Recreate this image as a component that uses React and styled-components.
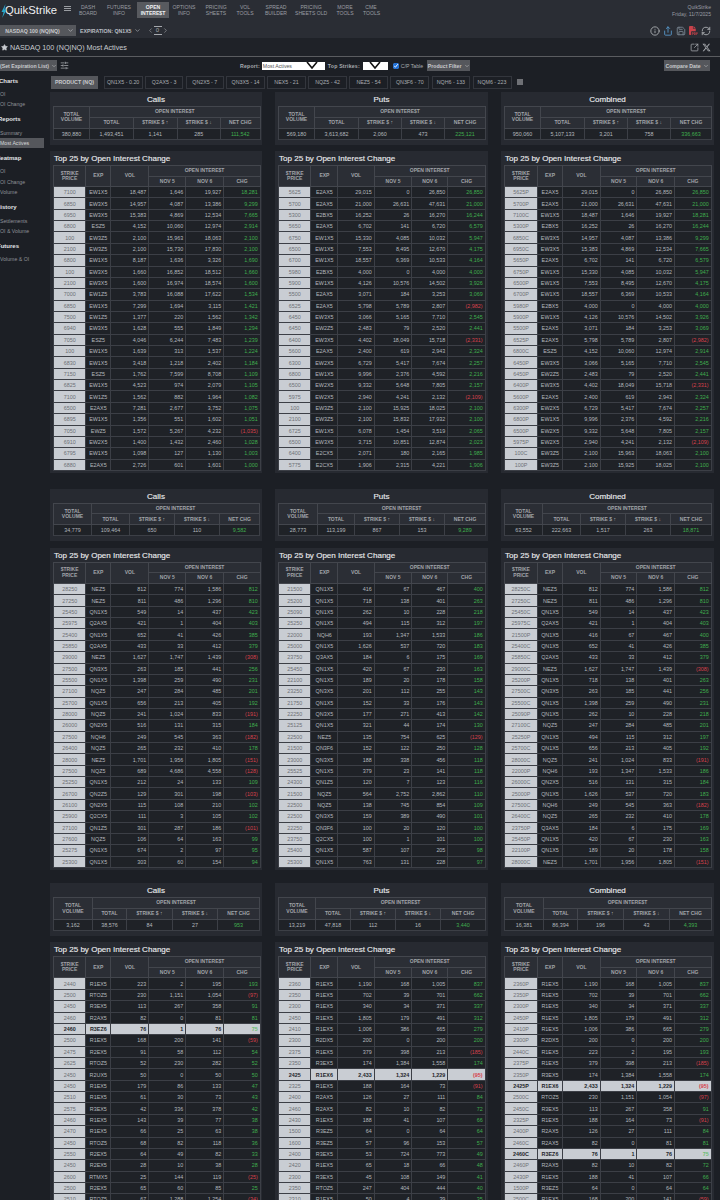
import React from "react";
import styled, { createGlobalStyle } from "styled-components";
import { ChevronDown, ChevronLeft, ChevronRight, Info, RefreshCw, Save, Share, SlidersHorizontal, SquareArrowOutUpRight, Star } from "lucide-react";
import { FaFilePdf, FaXTwitter } from "react-icons/fa6";

const GlobalStyle = createGlobalStyle`
  html, body {
    margin: 0;
    padding: 0;
    background: #1c1f25;
    overflow: hidden;
  }
  * { box-sizing: border-box; }
`;

const Page = styled.div`
  width: 720px;
  height: 1200px;
  overflow: hidden;
  background: #1c1f25;
  font-family: "Liberation Sans", Arial, sans-serif;
  color: #b9bdc3;
`;

const Header = styled.header`
  height: 38px;
  background: #2a2d34;
  display: flex;
  flex-direction: column;
`;

const TopRow = styled.div`
  height: 23px;
  display: flex;
  align-items: flex-start;
`;

const Logo = styled.div`
  width: 64px;
  padding: 4px 0 0 5px;
  font-size: 11.3px;
  line-height: 13px;
  color: #eef0f2;
  display: flex;
  position: relative;
`;

const Bolt = styled.svg`
  position: absolute;
  left: 1px;
  top: 4px;
`;

const Burger = styled.div`
  width: 7px;
  margin-top: 6px;
  border-top: 1px solid #9a9da2;
  border-bottom: 1px solid #9a9da2;
  height: 5px;
  &::after {
    content: "";
    display: block;
    height: 1px;
    margin-top: 1px;
    background: #9a9da2;
  }
`;

const Nav = styled.nav`
  display: flex;
  margin-left: 2px;
  padding-top: 2px;
`;

const NavItem = styled.div`
  width: ${(p) => p.$w}px;
  height: 16px;
  margin-left: ${(p) => p.$ml || 0}px;
  padding-top: 2px;
  text-align: center;
  font-size: 5.1px;
  line-height: 6px;
  white-space: nowrap;
  color: ${(p) => (p.$active ? "#f0f1f3" : "#9a9da3")};
  font-weight: ${(p) => (p.$active ? 700 : 400)};
  background: ${(p) => (p.$active ? "#585a5f" : "transparent")};
`;

const UserBlock = styled.div`
  margin-left: auto;
  padding: 4px 9px 0 0;
  text-align: right;
  font-size: 5.1px;
  line-height: 6.5px;
  color: #9a9da3;
`;

const SubRow = styled.div`
  height: 15px;
  display: flex;
  align-items: center;
`;

const GrayButton = styled.div`
  height: ${(p) => p.$h || 11}px;
  width: ${(p) => p.$w}px;
  margin-left: ${(p) => p.$ml || 0};
  background: #55575c;
  color: #c8cacd;
  font-size: 5.2px;
  font-weight: 700;
  display: flex;
  align-items: center;
  justify-content: center;
  gap: 2px;
  white-space: nowrap;
`;

const ExpirationLabel = styled.div`
  margin-left: 4px;
  font-size: 5.2px;
  font-weight: 700;
  color: #b9bdc3;
  display: flex;
  align-items: center;
  gap: 2px;
`;

const Stepper = styled.div`
  margin-left: 6px;
  display: flex;
  align-items: center;
  color: #a5a8ad;
`;

const CalendarMark = styled.div`
  width: 8px;
  height: 9px;
  border-top: 1px solid #a5a8ad;
  border-bottom: 1px solid #a5a8ad;
  font-size: 6px;
  line-height: 7px;
  text-align: center;
  color: #a5a8ad;
`;

const HeaderIcons = styled.div`
  margin-left: auto;
  padding-right: 9px;
  display: flex;
  align-items: center;
  gap: 3px;
`;

const TitleBar = styled.div`
  height: 19px;
  background: #1f2228;
  border-bottom: 1px solid #5a5c60;
  display: flex;
  align-items: center;
  padding: 0 9px 0 1px;
  font-size: 7.2px;
  color: #c9ccd0;
  gap: 2px;
`;

const TitleActions = styled.div`
  margin-left: auto;
  display: flex;
  align-items: center;
  gap: 3px;
  color: #a9acb1;
`;

const FilterRow = styled.div`
  height: 17px;
  display: flex;
  align-items: center;
  padding-right: 10px;
  font-size: 5.2px;
  color: #a8abb0;
`;

const SlidersIcon = styled(SlidersHorizontal)`
  margin-left: 3px;
`;

const FilterLabel = styled.div`
  margin-left: ${(p) => p.$ml}px;
  font-weight: 700;
  letter-spacing: 0.2px;
  white-space: nowrap;
`;

const WhiteSelect = styled.div`
  width: ${(p) => p.$w}px;
  height: 8px;
  margin-left: ${(p) => p.$ml}px;
  background: #fff;
  color: #555;
  font-size: 5.2px;
  line-height: 8px;
  padding-left: 1px;
  position: relative;
  overflow: hidden;
`;

const SelectArrow = styled.svg`
  position: absolute;
  right: ${(p) => p.$r}px;
  top: 0;
`;

const CheckBox = styled.input`
  width: 6px;
  height: 6px;
  margin: 0 2px 0 5px;
  accent-color: #1f6fd6;
`;

const Body = styled.div`
  display: flex;
  align-items: flex-start;
`;

const Sidebar = styled.aside`
  width: 44px;
  flex: none;
  overflow: hidden;
  padding-top: 1.5px;
`;

const SideHeading = styled.div`
  height: 11px;
  line-height: 11px;
  margin: ${(p) => (p.$first ? 0 : 4.8)}px 0 2.4px ${(p) => p.$offset}px;
  font-size: 6px;
  font-weight: 700;
  color: #e1e3e6;
  white-space: nowrap;
`;

const SideItem = styled.div`
  height: 10.3px;
  line-height: 10.3px;
  font-size: 5.2px;
  white-space: nowrap;
  color: ${(p) => (p.$active ? "#d6d8da" : "#8f9298")};
  background: ${(p) => (p.$active ? "#55575c" : "transparent")};
`;

const Content = styled.main`
  margin-left: 6px;
  width: 664px;
  flex: none;
`;

const Tabs = styled.div`
  height: 18px;
  padding: 1.5px 0 0 1px;
  display: flex;
  align-items: flex-start;
  gap: 2.6px;
`;

const Tab = styled.div`
  width: ${(p) => p.$w}px;
  height: 13px;
  margin-right: ${(p) => p.$mr || 0}px;
  border: 1px solid ${(p) => (p.$active ? "#55575c" : "#33363d")};
  background: ${(p) => (p.$active ? "#55575c" : "transparent")};
  color: ${(p) => (p.$active ? "#c8cacd" : "#a9acb1")};
  font-size: 5.3px;
  font-weight: ${(p) => (p.$active ? 700 : 400)};
  line-height: 11px;
  text-align: center;
  white-space: nowrap;
`;

const TabMenu = styled.div`
  width: 6px;
  height: 6px;
  margin: 3px 0 0 3px;
  background: #6e7075;
`;

const Section = styled.section`
  display: grid;
  grid-template-columns: 212px 213px 213px;
  column-gap: 13px;
  margin-top: ${(p) => p.$mt}px;
`;

const Column = styled.div`
  display: flex;
  flex-direction: column;
  gap: 6.5px;
`;

const Panel = styled.div`
  background: #272a31;
  padding: 0 3px ${(p) => p.$pb}px;
`;

const PanelTitle = styled.div`
  height: 14px;
  line-height: 15px;
  font-size: 8.05px;
  color: #e6e8ea;
  -webkit-text-stroke: 0.15px #e6e8ea;
  text-align: ${(p) => (p.$left ? "left" : "center")};
  padding-left: ${(p) => (p.$left ? 1 : 0)}px;
  white-space: nowrap;
`;

const Table = styled.table`
  width: 100%;
  table-layout: fixed;
  border-collapse: collapse;
  font-size: 5.4px;
  border: 1px solid #43464d;
`;

const Th = styled.th`
  padding: 0;
  height: ${(p) => p.$h}px;
  background: #2b2e35;
  border: 1px solid #43464d;
  font-weight: 700;
  font-size: 5px;
  line-height: 5.5px;
  color: #a1a4a9;
  text-align: center;
  white-space: nowrap;
  overflow: hidden;
`;

const Tr = styled.tr`
  height: ${(p) => p.$h}px;
`;

const Td = styled.td`
  padding: 0 ${(p) => (p.$align === "right" ? 2 : 0)}px 0 0;
  height: ${(p) => p.$h}px;
  border: 1px solid #3c3f46;
  line-height: 6px;
  white-space: nowrap;
  overflow: hidden;
  text-align: ${(p) => p.$align};
  background: ${(p) => (p.$light || p.$hl ? "#c9cdd3" : "#1f2227")};
  color: ${(p) => (p.$hl ? "#23252a" : p.$light ? "#6d7075" : "#b4b8be")};
  font-weight: ${(p) => (p.$hl ? 700 : 400)};
`;

const ChgCell = styled(Td)`
  color: ${(p) => (p.$neg ? "#d8414c" : p.$hl ? "#6cbf74" : "#3fae4e")};
`;

const NAV = [
  ["DASH", "BOARD", 30],
  ["FUTURES", "INFO", 32],
  ["OPEN", "INTERE$T", 32, 2, true],
  ["OPTIONS", "INFO", 30],
  ["PRICING", "SHEETS", 34],
  ["VOL", "TOOLS", 24],
  ["SPREAD", "BUILDER", 38],
  ["PRICING", "SHEETS OLD", 32],
  ["MORE", "TOOLS", 36],
  ["CME", "TOOLS", 16],
];

const TABS = [
  ["QN1X5 - 0.20", 39],
  ["Q2AX5 - 3", 38],
  ["QN2X5 - 7", 38],
  ["QN3X5 - 14", 38.4],
  ["NEX5 - 21", 38.4],
  ["NQZ5 - 42", 38.4],
  ["NEZ5 - 54", 38.4],
  ["QN3F6 - 70", 39],
  ["NQH6 - 133", 38],
  ["NQM6 - 223", 39],
];

const SIDE = [
  ["Charts", -1, ["OI", "OI Change"]],
  ["Reports", -2, ["Summary", "Most Actives"]],
  ["Heatmap", -4, ["OI", "OI Change", "Volume"]],
  ["History", -4, ["Settlements", "OI & Volume"]],
  ["Futures", -3, ["Volume & OI"]],
];

const SECTIONS = [
  {
    mt: 0,
    sum: [
      ["380,880", "1,493,451", "1,141", "285", "111,542"],
      ["569,180", "3,613,682", "2,060", "473", "225,121"],
      ["950,060", "5,107,133", "3,201", "758", "336,663"],
    ],
    sumCols: [[36, 44, 43.5, 43.5, 39.5], [36, 44, 43, 43, 41], [36, 44, 43, 43, 41]],
    combined: "p0 p1 c0 p2 c1 c2 p3 p4 p5 p6 p7 p8 p9 p10 c3 p11 p12 p13 p14 p15 p16 p17 p18 c4 p19",
    calls: `7100 EW1X5 18,487 1,646 19,927 18,281
6850 EW3X5 14,957 4,087 13,386 9,299
6950 EW3X5 15,383 4,869 12,534 7,665
6800 ESZ5 4,152 10,060 12,974 2,914
100 EW3Z5 2,100 15,963 18,063 2,100
2100 EW3Z5 2,100 15,730 17,830 2,100
6800 EW1X5 8,187 1,636 3,326 1,690
100 EW3X5 1,660 16,852 18,512 1,660
2100 EW3X5 1,600 16,974 18,574 1,600
7000 EW1Z5 3,783 16,088 17,622 1,534
6850 EW1X5 7,299 1,694 3,115 1,421
7500 EW1Z5 1,377 220 1,562 1,342
6940 EW3X5 1,628 555 1,849 1,294
7050 ESZ5 4,046 6,244 7,483 1,239
100 EW1X5 1,639 313 1,537 1,224
6830 EW1X5 3,418 1,218 2,402 1,184
7150 ESZ5 1,762 7,599 8,708 1,109
6825 EW1X5 4,523 974 2,079 1,105
7100 EW1Z5 1,562 882 1,964 1,082
6500 E2AX5 7,281 2,677 3,752 1,075
6895 EW1X5 1,356 551 1,602 1,051
7050 EWZ5 1,572 5,267 4,232 (1,035)
6910 EW2X5 1,400 1,432 2,460 1,028
6795 EW1X5 1,098 127 1,130 1,003
6880 E2AX5 2,726 601 1,601 1,000`,
    puts: `5625 E2AX5 29,015 0 26,850 26,850
5700 E2AX5 21,000 26,631 47,631 21,000
5300 E2BX5 16,252 26 16,270 16,244
5650 E2AX5 6,702 141 6,720 6,579
6750 EW1X5 15,330 4,085 10,032 5,947
6500 EW1X5 7,553 8,495 12,670 4,175
6700 EW1X5 18,557 6,369 10,533 4,164
5980 E2BX5 4,000 0 4,000 4,000
5900 EW1X5 4,126 10,576 14,502 3,926
5500 E2AX5 3,071 184 3,253 3,069
6525 E2AX5 5,798 5,789 2,807 (2,982)
6450 EW3X5 3,066 5,165 7,710 2,545
6450 EW2Z5 2,483 79 2,520 2,441
6400 EW3X5 4,402 18,049 15,718 (2,331)
5600 E2AX5 2,400 619 2,943 2,324
6300 EW2X5 6,729 5,417 7,674 2,257
6800 EW1X5 9,996 2,376 4,592 2,216
6500 EW2X5 9,332 5,648 7,805 2,157
5975 EW2X5 2,940 4,241 2,132 (2,109)
100 EW3Z5 2,100 15,925 18,025 2,100
2100 EW3Z5 2,100 15,832 17,932 2,100
6725 EW1X5 6,078 1,454 3,519 2,065
6500 EW3X5 3,715 10,851 12,874 2,023
6400 E2CX5 2,071 180 2,165 1,985
5775 E2CX5 1,906 2,315 4,221 1,906`,
  },
  {
    mt: 16,
    sum: [
      ["34,779", "109,464", "650", "110", "9,582"],
      ["28,773", "113,199", "867", "153", "9,289"],
      ["63,552", "222,663", "1,517", "263", "18,871"],
    ],
    sumCols: [[38, 38, 45, 45, 40], [39, 37, 45, 45, 41], [38, 38, 45, 45, 41]],
    combined: "c0 c1 c2 c3 p0 c4 c5 c6 p1 c7 c8 p2 c9 p3 c10 c11 p4 c12 p5 c13 c14 p6 p7 p8 c15",
    calls: `28250 NEZ5 812 774 1,586 812
27250 NEZ5 811 486 1,296 810
25450 QN1X5 549 14 437 423
25975 Q2AX5 421 1 404 403
25400 QN1X5 652 41 426 385
25850 Q2AX5 433 33 412 379
29000 NEZ5 1,627 1,747 1,439 (308)
27500 QN3X5 263 185 441 256
25500 QN1X5 1,398 259 490 231
27100 NQZ5 247 284 485 201
25700 QN1X5 656 213 405 192
28000 NQZ5 241 1,024 833 (191)
26000 QN2X5 516 131 315 184
27500 NQH6 249 545 363 (182)
26400 NQZ5 265 232 410 178
28000 NEZ5 1,701 1,956 1,805 (151)
27500 NQZ5 689 4,686 4,558 (128)
25250 QN1X5 212 24 133 109
26700 QN2Z5 129 301 198 (103)
26100 QN2X5 115 108 210 102
25900 Q2CX5 111 3 105 102
27100 QN1Z5 301 287 186 (101)
27600 NQZ5 106 64 163 99
25275 QN1X5 674 2 97 95
25300 QN1X5 303 60 154 94`,
    puts: `21500 QN1X5 416 67 467 400
25200 QN1X5 718 138 401 263
25090 QN1X5 262 10 228 218
25250 QN1X5 494 115 312 197
22000 NQH6 193 1,347 1,533 186
25000 QN1X5 1,626 537 720 183
23750 Q3AX5 184 6 175 169
25450 QN1X5 420 67 230 163
22100 QN1X5 189 20 178 158
23250 QN3X5 201 112 255 143
21750 QN1X5 152 33 176 143
22250 QN3X5 177 271 413 142
25125 QN1X5 321 44 174 130
22500 NEZ5 135 754 625 (129)
21500 QN3F6 152 122 250 128
23000 QN3X5 188 338 456 118
25525 QN1X5 379 23 141 118
24300 QN1Z5 120 7 123 116
21500 NQZ5 564 2,752 2,862 110
22500 NQZ5 138 745 854 109
22500 QN3X5 159 389 490 101
22250 QN3F6 100 20 120 100
23750 Q2CX5 100 1 101 100
25400 QN1X5 587 107 205 98
25300 QN1X5 763 131 228 97`,
  },
  {
    mt: 13.5,
    sum: [
      ["3,162", "38,576", "84", "27", "953"],
      ["13,219", "47,818", "112", "16", "3,440"],
      ["16,381", "86,394", "196", "43", "4,393"],
    ],
    sumCols: [[39, 34, 46, 45, 42], [37, 35, 45, 45, 45], [39, 34, 46, 46, 42]],
    combined: "p0 p1 p2 p3 p4 p5 c0 p6 p7 p8 c1 c2 p9 p10 c3 c4 p11 p12 p13 c5",
    calls: `2440 R1EX5 223 2 195 193
2500 RTOZ5 230 1,151 1,054 (97)
2450 R3EX5 113 267 358 91
2460 R2AX5 82 0 81 81
*2460 R3EZ6 76 1 76 75
2500 R1EX5 168 200 141 (59)
2475 R2EX5 91 58 112 54
2625 RTOZ5 52 230 282 52
2450 R2UX5 50 0 50 50
2450 R1EX5 179 86 133 47
2510 R1EX5 61 30 73 43
2575 R3EX5 42 336 378 42
2460 R1EX5 143 39 77 38
2470 R1EX5 66 25 63 38
2450 RTOZ5 68 82 118 36
2550 R2EX5 64 49 82 33
2450 R2EX5 28 10 38 28
2600 RTMX5 25 144 119 (25)
2500 R2EX5 65 60 85 25
2510 RTOZ5 67 1,288 1,254 (34)`,
    puts: `2360 R1EX5 1,190 168 1,005 837
2350 R1EX5 702 39 701 662
2300 R1EX5 340 34 371 337
2450 R1EX5 1,805 179 491 312
2410 R1EX5 1,006 386 665 279
2300 R2DX5 200 0 200 200
2375 R1EX5 379 398 213 (185)
2350 R3EX5 174 1,384 1,558 174
*2425 R1EX6 2,433 1,324 1,229 (95)
2325 R1EX5 188 164 73 (91)
2400 R2AX5 126 27 111 84
2460 R2AX5 82 10 82 72
2430 R1EX5 188 41 107 66
1500 R3EZ5 64 0 64 64
1600 R3EZ5 57 96 153 57
2400 R3EX5 53 724 773 49
2420 R1EX5 65 18 66 48
2300 R3EX5 45 108 149 41
2350 RTOZ5 247 404 444 40
2310 R1EX5 50 4 39 35`,
  },
];

const TOP_COLS = [
  [32.3, 25, 38, 37, 38, 36.4],
  [32.4, 27, 36.3, 37.7, 36, 37.3],
  [33, 25, 37.7, 36.7, 37.7, 36.6],
];

const ROW_H = 11.37;

const parseRows = (text) =>
  text.split("\n").map((line) => {
    const hl = line.startsWith("*");
    const [strike, exp, vol, a, b, chg] = line.replace("*", "").split(" ");
    return { hl, strike, exp, vol, a, b, chg };
  });

const combineRows = (order, calls, puts) =>
  order.split(" ").map((ref) => {
    const side = ref[0];
    const row = (side === "c" ? calls : puts)[Number(ref.slice(1))];
    return { ...row, strike: row.strike + side.toUpperCase() };
  });

const Cols = ({ widths }) => (
  <colgroup>
    {widths.map((w, i) => (
      <col key={i} width={w} />
    ))}
  </colgroup>
);

const Summary = ({ title, values, cols }) => (
  <Panel $pb={5}>
    <PanelTitle>{title}</PanelTitle>
    <Table>
      <Cols widths={cols} />
      <thead>
        <Tr $h={10.5}>
          <Th rowSpan={2} $h={10.5}>
            TOTAL
            <br />
            VOLUME
          </Th>
          <Th colSpan={4} $h={10.5}>
            OPEN INTERE$T
          </Th>
        </Tr>
        <Tr $h={11}>
          <Th $h={11}>TOTAL</Th>
          <Th $h={11}>$TRIKE $ ↑</Th>
          <Th $h={11}>$TRIKE $ ↓</Th>
          <Th $h={11}>NET CHG</Th>
        </Tr>
      </thead>
      <tbody>
        <Tr $h={11}>
          {values.slice(0, 4).map((v, i) => (
            <Td key={i} $h={11} $align="center">
              {v}
            </Td>
          ))}
          <ChgCell $h={11} $align="center">
            {values[4]}
          </ChgCell>
        </Tr>
      </tbody>
    </Table>
  </Panel>
);

const TopTable = ({ rows, cols }) => (
  <Panel $pb={2}>
    <PanelTitle $left>Top 25 by Open Interest Change</PanelTitle>
    <Table>
      <Cols widths={cols} />
      <thead>
        <Tr $h={10.5}>
          <Th rowSpan={2} $h={10.5}>
            $TRIKE
            <br />
            PRICE
          </Th>
          <Th rowSpan={2} $h={10.5}>
            EXP
          </Th>
          <Th rowSpan={2} $h={10.5}>
            VOL
          </Th>
          <Th colSpan={3} $h={10.5}>
            OPEN INTERE$T
          </Th>
        </Tr>
        <Tr $h={10.5}>
          <Th $h={10.5}>NOV 5</Th>
          <Th $h={10.5}>NOV 6</Th>
          <Th $h={10.5}>CHG</Th>
        </Tr>
      </thead>
      <tbody>
        {rows.map((r, i) => (
          <Tr key={i} $h={ROW_H}>
            <Td $h={ROW_H} $align="center" $light $hl={r.hl}>
              {r.strike}
            </Td>
            <Td $h={ROW_H} $align="center" $hl={r.hl}>
              {r.exp}
            </Td>
            <Td $h={ROW_H} $align="right" $hl={r.hl}>
              {r.vol}
            </Td>
            <Td $h={ROW_H} $align="right" $hl={r.hl}>
              {r.a}
            </Td>
            <Td $h={ROW_H} $align="right" $hl={r.hl}>
              {r.b}
            </Td>
            <ChgCell $h={ROW_H} $align="right" $hl={r.hl} $neg={r.chg.startsWith("(")}>
              {r.chg}
            </ChgCell>
          </Tr>
        ))}
      </tbody>
    </Table>
  </Panel>
);

const DataSection = ({ data }) => {
  const calls = parseRows(data.calls);
  const puts = parseRows(data.puts);
  const tables = [calls, puts, combineRows(data.combined, calls, puts)];
  return (
    <Section $mt={data.mt}>
      {["Calls", "Puts", "Combined"].map((title, i) => (
        <Column key={title}>
          <Summary title={title} values={data.sum[i]} cols={data.sumCols[i]} />
          <TopTable rows={tables[i]} cols={TOP_COLS[i]} />
        </Column>
      ))}
    </Section>
  );
};

const App = () => (
  <Page>
    <GlobalStyle />
    <Header>
      <TopRow>
        <Logo>
          <Bolt width="6" height="14" viewBox="0 0 6 14">
            <path d="M4.5 0 L0.5 8 L2.6 8 L1.2 14 L5.6 5.5 L3.4 5.5 Z" fill="#2aa7c9" />
          </Bolt>
          QuikStrike
        </Logo>
        <Burger />
        <Nav>
          {NAV.map(([a, b, w, ml, active]) => (
            <NavItem key={a + b} $w={w} $ml={ml} $active={active}>
              {a}
              <br />
              {b}
            </NavItem>
          ))}
        </Nav>
        <UserBlock>
          QuikStrike
          <br />
          Friday, 11/7/2025
        </UserBlock>
      </TopRow>
      <SubRow>
        <GrayButton $w={65}>NASDAQ 100 (NQ|NQ)</GrayButton>
        <GrayButton $w={11}>
          <ChevronDown size={7} />
        </GrayButton>
        <ExpirationLabel>
          EXPIRATION: QN1X5 <ChevronDown size={7} />
        </ExpirationLabel>
        <Stepper>
          <ChevronLeft size={7} />
          <CalendarMark>0</CalendarMark>
          <ChevronRight size={7} />
        </Stepper>
        <HeaderIcons>
          <Info size={10} color="#b5b8bc" />
          <Share size={10} color="#5aa0d6" />
          <Save size={10} color="#7f8d99" />
          <FaFilePdf size={9} color="#c9434b" />
          <RefreshCw size={10} color="#b5b8bc" />
        </HeaderIcons>
      </SubRow>
    </Header>
    <TitleBar>
      <Star size={7} fill="#c9ccd0" color="#c9ccd0" />
      NASDAQ 100 (NQ|NQ) Most Actives
      <TitleActions>
        <SquareArrowOutUpRight size={9} />
        <FaXTwitter size={9} />
      </TitleActions>
    </TitleBar>
    <FilterRow>
      <GrayButton $w={57}>
        (Set Expiration List) <ChevronDown size={6} />
      </GrayButton>
      <SlidersIcon size={9} />
      <FilterLabel $ml={171}>Report:</FilterLabel>
      <WhiteSelect $w={63} $ml={2}>
        Most Actives
        <SelectArrow $r={7} width="12" height="8" viewBox="0 0 12 8">
          <path d="M1 0 L6 6 L11 0" fill="none" stroke="#111" strokeWidth="1.6" />
        </SelectArrow>
      </WhiteSelect>
      <FilterLabel $ml={3}>Top Strikes:</FilterLabel>
      <WhiteSelect $w={25} $ml={3}>
        <SelectArrow $r={7} width="12" height="8" viewBox="0 0 12 8">
          <path d="M1 0 L6 6 L11 0" fill="none" stroke="#111" strokeWidth="1.6" />
        </SelectArrow>
      </WhiteSelect>
      <CheckBox type="checkbox" defaultChecked />
      C/P Table
      <GrayButton $w={43} $ml="4px">
        Product Filter <ChevronDown size={6} />
      </GrayButton>
      <GrayButton $w={46} $ml="auto">
        Compare Date <ChevronDown size={6} />
      </GrayButton>
    </FilterRow>
    <Body>
      <Sidebar>
        {SIDE.map(([head, offset, items], i) => (
          <div key={head}>
            <SideHeading $first={i === 0} $offset={offset}>
              {head}
            </SideHeading>
            {items.map((item) => (
              <SideItem key={item} $active={item === "Most Actives"}>
                {item}
              </SideItem>
            ))}
          </div>
        ))}
      </Sidebar>
      <Content>
        <Tabs>
          <Tab $w={47} $mr={3} $active>
            PRODUCT (NQ)
          </Tab>
          {TABS.map(([label, w]) => (
            <Tab key={label} $w={w}>
              {label}
            </Tab>
          ))}
          <TabMenu />
        </Tabs>
        {SECTIONS.map((s, i) => (
          <DataSection key={i} data={s} />
        ))}
      </Content>
    </Body>
  </Page>
);

export default App;
